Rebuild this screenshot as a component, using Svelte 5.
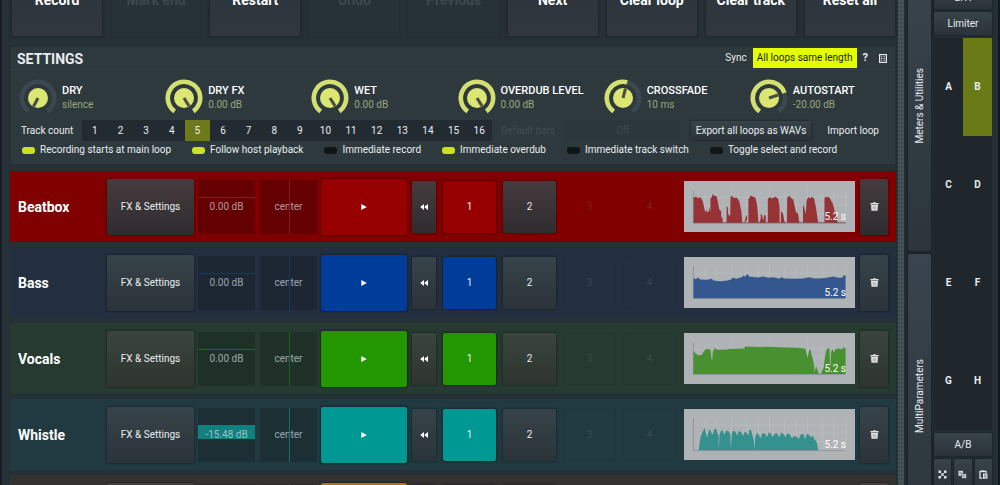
<script lang="ts">
interface Track {
  name: string;
  kind: string;
  gain: string;
  /** Height of the volume bar, percent of its cell. */
  level: number;
  wave: string;
}

const actions = [
  { label: "Record" },
  { label: "Mark end", off: true },
  { label: "Restart" },
  { label: "Undo", off: true },
  { label: "Previous", off: true },
  { label: "Next" },
  { label: "Clear loop" },
  { label: "Clear track" },
  { label: "Reset all" },
];

// Angles are degrees clockwise from the top; the arc runs from -145 to 145.
const knobs = [
  { label: "DRY", value: "silence", angle: -152 },
  { label: "DRY FX", value: "0.00 dB", angle: 148 },
  { label: "WET", value: "0.00 dB", angle: 148 },
  { label: "OVERDUB LEVEL", value: "0.00 dB", angle: 148 },
  { label: "CROSSFADE", value: "10 ms", angle: 15 },
  { label: "AUTOSTART", value: "-20.00 dB", angle: 72 },
];

const options = $state([
  { label: "Recording starts at main loop", on: true },
  { label: "Follow host playback", on: true },
  { label: "Immediate record", on: false },
  { label: "Immediate overdub", on: true },
  { label: "Immediate track switch", on: false },
  { label: "Toggle select and record", on: false },
]);

const counts = Array.from({ length: 16 }, (_, i) => i + 1);
let trackCount = $state(5);
let preset = $state("B");

const tracks: Track[] = [
  {
    name: "Beatbox",
    kind: "red",
    gain: "0.00 dB",
    level: 0,
    wave: "M28 124V50L36 46L40 51L50 49L56 60L62 88L66 94V84L70 94L75 88L77 78L79 94V52L83 48L86 39L91 45H97L101 62L105 84L111 90V106L115 112V120L117 124H127V74L131 80V94L135 106L138 98L139 46L143 44L147 50L158 50L165 60L171 90L174 124H180L185 106L188 100V116L181 124H192V54L196 50L198 43L204 46L213 50L218 72L220 94L222 124H225L229 112V96L233 102L236 118L240 98L244 106V124H250V54L256 48L262 52L272 47L281 53L285 78V124H289V90L295 96L299 118L301 124H307L308 50L314 44L318 49L326 56L332 84L334 94L340 96L344 124H355V70L359 80L363 100L366 56L372 48L376 53L380 47L388 52L394 82L400 124H419V50L427 47L434 50L444 68L450 92L455 106L458 124H482V126H28Z",
  },
  {
    name: "Bass",
    kind: "blue",
    gain: "0.00 dB",
    level: 0,
    wave: "M28 123V62L34 66L42 61L48 67L70 68L82 65L88 70L108 72L130 70L140 67L146 61L156 65L172 60L177 55L182 59L189 50L194 58L220 61L236 58L252 62L268 60L284 65L290 60L300 64L332 65L356 64L372 60L390 64L412 63L430 61L446 58L460 62L474 61V55H482V123Z",
  },
  {
    name: "Vocals",
    kind: "green",
    gain: "0.00 dB",
    level: 0,
    wave: "M28 122V54L34 60L42 66L54 65L57 58L63 49L72 48L79 50L82 78L84 82L86 56L92 44L98 50L126 49L136 48L180 46L182 40L226 42L250 41L300 43L340 44L362 47L366 64L369 74L373 52L378 50L380 64L384 76L388 96L390 118L394 98L400 116L404 124H408L412 112L416 106L420 74L424 52L428 46L434 46L435 88L437 102L438 60L442 48L448 58L452 48L464 46L472 49L476 42L482 46V122Z",
  },
  {
    name: "Whistle",
    kind: "teal",
    gain: "-15.48 dB",
    level: 26,
    wave: "M44 123L48 90L52 76L58 64L62 56L64 68L69 86L74 64L77 60L82 72L86 76L90 60L96 58L100 72L103 80L104 120L106 76L112 62L116 66L120 77L126 64L134 67L138 76L140 120L142 76L147 64L154 68L158 80L164 65L171 70L176 81L181 67L188 72L192 80L195 62L200 62L204 78L208 92L210 122L213 82L218 70L224 78L228 88L234 72L242 73L247 84L253 70L259 72L264 84L270 74L278 72L284 84L290 70L298 76L303 84L308 72L316 76L322 88L329 80L338 84L342 90L348 76L356 74L361 90L367 72L374 78L378 84L384 80L390 92L396 98L400 123Z",
  },
  { name: "", kind: "orange", gain: "", level: 0, wave: "" },
];
</script>

<div class="window">
  <div class="looper">
    <main>
      <div class="toolbar">
        {#each actions as a (a.label)}
          <button class="action" type="button" disabled={a.off}>{a.label}</button>
        {/each}
      </div>

      <section class="settings">
        <header>
          <h2>SETTINGS</h2>
          <button class="plain" type="button">Sync</button>
          <button class="same-length" type="button">All loops same length</button>
          <button class="plain help" type="button">?</button>
          <button class="plain" type="button" aria-label="Menu">
            <svg width="8" height="9" viewBox="0 0 8 9">
              <rect x=".6" y=".6" width="6.8" height="7.8" fill="none" stroke="#e8ecee" stroke-width="1.2" />
              <path d="M2.2 2.8h1.2M4.6 2.8h1.2M2.2 4.5h1.2M4.6 4.5h1.2M2.2 6.2h1.2M4.6 6.2h1.2" stroke="#e8ecee" stroke-width="1" />
            </svg>
          </button>
        </header>

        <div class="knobs">
          {#each knobs as k (k.label)}
            <label class="knob">
              <svg width="40" height="40" viewBox="-20 -20 40 40">
                <circle
                  class="arc track"
                  r="16.2"
                  pathLength="360"
                  stroke-dasharray="290 360"
                  transform="rotate(125)"
                />
                {#if k.angle > -145}
                  <circle
                    class="arc"
                    r="16.2"
                    pathLength="360"
                    stroke-dasharray="{Math.min(k.angle, 145) + 145} 360"
                    transform="rotate(125)"
                  />
                {/if}
                <circle r="10" fill="#dbe673" />
                <path d="M0 0V-9.6" stroke="#4b4e3c" stroke-width="3" transform="rotate({k.angle})" />
              </svg>
              <span class="knob-text">
                <b>{k.label}</b>
                <span>{k.value}</span>
              </span>
              <input class="hit" type="range" min="-145" max="145" value={k.angle} />
            </label>
          {/each}
        </div>

        <div class="count-row">
          <span class="count-label">Track count</span>
          <div class="counts" role="radiogroup" aria-label="Track count">
            {#each counts as n (n)}
              <label class:picked={n === trackCount}>
                <input class="hit" type="radio" name="count" value={n} bind:group={trackCount} />{n}
              </label>
            {/each}
          </div>
          <label class="bars-label" for="bars">Default bars</label>
          <select id="bars" disabled><option>Off</option></select>
          <button class="raised export" type="button">Export all loops as WAVs</button>
          <button class="plain import" type="button">Import loop</button>
        </div>

        <div class="options">
          {#each options as o (o.label)}
            <label><input type="checkbox" bind:checked={o.on} />{o.label}</label>
          {/each}
        </div>
      </section>

      <div class="tracks">
        {#each tracks as t (t.kind)}
          <section class="row {t.kind}">
            <h3>{t.name}</h3>
            <div class="mix">
              <button class="raised tall" type="button">FX &amp; Settings</button>
              <label class="cell volume">
                {#if t.level}
                  <i class="fill" style="height: {t.level}%"></i>
                {:else}
                  <i class="zero"></i>
                {/if}
                <span>{t.gain}</span>
                <input class="hit" type="range" />
              </label>
              <label class="cell pan">
                <span>center</span>
                <i class="middle"></i>
                <input class="hit" type="range" />
              </label>
              <button class="lit play" type="button" aria-label="Play">
                <svg width="6" height="6" viewBox="0 0 6 6"><path d="M.3 0L5.8 3L.3 6Z" fill="#fff" /></svg>
              </button>
              <button class="raised rewind" type="button" aria-label="Rewind">
                <svg width="8" height="6" viewBox="0 0 8 6"><path d="M4 0V6L.2 3ZM8 0V6L4.2 3Z" fill="#fff" /></svg>
              </button>
            </div>
            <div class="loops">
              <button class="lit" type="button">1</button>
              <button class="raised" type="button">2</button>
              <button class="empty" type="button" disabled>3</button>
              <button class="empty" type="button" disabled>4</button>
            </div>
            <div class="wave">
              <svg viewBox="0 0 510 152" preserveAspectRatio="none">
                <path
                  d="M62 28V124M96 28V124M142 24V124M187 28V124M222 28V124M255 24V124M300 28V124M334 28V124M368 24V124M414 28V124M448 28V124M482 28V124M28 48H482M28 72H482M28 98H482"
                  stroke="#bbbec1"
                  stroke-width="2"
                />
                <path d={t.wave} class="shape" />
                <path d="M28 28V124H482" fill="none" stroke="#666e74" stroke-opacity=".6" stroke-width="2" />
              </svg>
              <span>5.2 s</span>
            </div>
            <button class="raised trash" type="button" aria-label="Delete">
              <svg width="9" height="9" viewBox="0 0 9 9">
                <path d="M.4 1.1H3L3.4.3H5.6L6 1.1H8.6V2.5H.4ZM1 3H8L7.6 8.2Q7.5 8.8 6.9 8.8H2.1Q1.5 8.8 1.4 8.2Z" fill="#e2e2e2" />
                <path d="M3.2 4V7.6M4.5 4V7.6M5.8 4V7.6" stroke="#888" stroke-width=".5" />
              </svg>
            </button>
          </section>
        {/each}
      </div>
    </main>

    <div class="scrollbar"></div>

    <nav class="tabs">
      <button type="button"><span>Meters &amp; Utilities</span></button>
      <button type="button"><span>MultiParameters</span></button>
    </nav>

    <aside>
      <button class="raised side-top" type="button">LTH</button>
      <button class="raised" type="button">Limiter</button>
      <div class="presets">
        {#each ["A", "B", "C", "D", "E", "F", "G", "H"] as p (p)}
          <button type="button" class:active={p === preset} onclick={() => (preset = p)}>{p}</button>
        {/each}
      </div>
      <button class="raised" type="button">A/B</button>
      <div class="tools">
        <button class="raised" type="button" aria-label="Random">
          <svg width="9" height="9" viewBox="0 0 9 9" fill="#dfe4e6">
            <path d="M.5 .5H3V3H.5ZM6 .5H8.5V3H6ZM.5 6H3V8.5H.5ZM6 6H8.5V8.5H6ZM3.5 3.5H5.5V5.5H3.5Z" />
            <path d="M1 1L8 8M8 1L1 8" stroke="#dfe4e6" stroke-width=".9" />
          </svg>
        </button>
        <button class="raised" type="button" aria-label="Copy">
          <svg width="9" height="9" viewBox="0 0 9 9">
            <path d="M.5 .8H5V5.8H.5Z" fill="#dfe4e6" />
            <path d="M1.3 2.3H4M1.3 3.8H4" stroke="#5d666b" stroke-width=".6" />
            <path d="M3.8 3.8H8.5V8.5H3.8Z" fill="#dfe4e6" stroke="#2b353b" stroke-width=".6" />
            <path d="M5 5.5H7.5M5 7H7.5" stroke="#5d666b" stroke-width=".6" />
          </svg>
        </button>
        <button class="raised" type="button" aria-label="Paste">
          <svg width="9" height="9" viewBox="0 0 9 9">
            <path d="M3.5 8.2H1V1.3H7V3" fill="none" stroke="#dfe4e6" stroke-width="1.3" />
            <path d="M2.5 .4H5.5V2.2H2.5Z" fill="#dfe4e6" />
            <path d="M4 3.5H8.5V8.7H4Z" fill="#dfe4e6" />
            <path d="M5 5.3H7.5M5 7H7.5" stroke="#4a5359" stroke-width=".7" />
          </svg>
        </button>
      </div>
    </aside>
  </div>
</div>

<style>
  :global(body) {
    margin: 0;
    background: #20292f;
  }
  .window {
    height: 100vh;
    overflow: hidden;
    background: #20292f;
    color: #e9edef;
    font-family: Roboto, "Liberation Sans", sans-serif;
    font-size: 10px;
    line-height: 14px;
  }
  /* The view is scrolled half a toolbar down. */
  .looper {
    display: flex;
    height: calc(100vh + 92px);
    margin-top: -36px;
    border-right: 2px solid #14191d;
    border-left: 2px solid #151a24;
  }
  button {
    padding: 0;
    border: 0;
    border-radius: 2px;
    background: none;
    color: inherit;
    font: inherit;
    white-space: nowrap;
    cursor: pointer;
  }
  button svg {
    display: block;
    margin: auto;
  }
  h2,
  h3 {
    margin: 0;
    font-size: 14px;
    font-weight: 700;
  }
  .hit {
    position: absolute;
    inset: 0;
    width: 100%;
    height: 100%;
    margin: 0;
    opacity: 0;
    cursor: pointer;
  }
  .raised {
    background: linear-gradient(#37434a, #2a3339);
    box-shadow: 0 0 2px 1px rgb(0 0 0 / 0.25);
  }
  main {
    flex: 1;
    min-width: 0;
    padding: 0 2px 0 8px;
    background: #263137;
  }

  .toolbar {
    display: grid;
    grid-template-columns: repeat(9, 1fr);
    gap: 9px;
    margin-bottom: 11px;
    padding: 0 1px 0 2px;
  }
  .action {
    height: 72px;
    background: linear-gradient(#333f46, #2c363c 50%, #30383e);
    box-shadow: 0 0 2px 2px rgb(0 0 0 / 0.16);
    color: #fff;
    font-size: 14px;
    font-weight: 700;
  }
  .action:disabled {
    background: #273237;
    box-shadow: 0 0 2px 1px rgb(0 0 0 / 0.05);
    color: #3d484d;
  }

  .settings {
    padding-bottom: 7px;
    margin: 0 1px;
    background: #2e393e;
  }
  .settings header {
    display: flex;
    align-items: center;
    height: 22px;
    margin-bottom: 8px;
    padding: 0 8px 0 6px;
    border-bottom: 1px solid #344045;
  }
  .settings h2 {
    flex: 1;
    padding-top: 2px;
  }
  .same-length {
    height: 20px;
    margin: 0 6px;
    padding: 0 4px;
    border-radius: 0;
    background: #e3ff00;
    color: #1b2400;
  }
  .help {
    margin-right: 11px;
    font-size: 11px;
    font-weight: 700;
  }
  .knobs {
    display: grid;
    grid-template-columns: repeat(6, 1fr);
    padding-left: 7px;
  }
  .knob {
    position: relative;
    display: flex;
    align-items: center;
    gap: 4px;
  }
  .arc {
    fill: none;
    stroke: #d3df71;
    stroke-width: 4.6;
  }
  .arc.track {
    stroke: #3c474f;
  }
  .knob-text {
    display: flex;
    flex-direction: column;
    color: #97a77b;
  }
  .knob-text b {
    color: #fff;
    font-size: 11px;
    font-weight: 500;
  }
  .count-row {
    display: flex;
    align-items: center;
    height: 21px;
    margin-top: 2px;
    padding: 0 8px 0 10px;
  }
  .count-label {
    width: 61px;
  }
  .counts {
    display: grid;
    grid-template-columns: repeat(16, 1fr);
    flex: 0 1 410px;
    background: #222b32;
    line-height: 21px;
    text-align: center;
  }
  .counts label {
    position: relative;
  }
  .counts .picked {
    background: #6d7a1b;
  }
  .bars-label {
    margin-left: 9px;
    color: #414c50;
  }
  select {
    flex: 1;
    height: 20px;
    margin: 0 11px;
    border: 0;
    appearance: none;
    background: #2c373b;
    color: #3e494d;
    font: inherit;
    text-align: center;
    opacity: 1;
  }
  .export {
    height: 19px;
    padding: 0 5px;
  }
  .import {
    margin: 0 8px 0 16px;
  }
  .options {
    display: flex;
    gap: 21px;
    margin-top: 2px;
    padding-left: 11px;
    white-space: nowrap;
  }
  .options label {
    display: flex;
    align-items: center;
    gap: 5px;
  }
  .options input {
    width: 13px;
    height: 7px;
    margin: 0;
    border-radius: 3px;
    appearance: none;
    background: #101516;
  }
  .options input:checked {
    background: #cbe31e;
  }

  .tracks {
    display: flex;
    flex-direction: column;
    gap: 5px;
    margin-top: 7px;
  }
  .row {
    --cell: rgb(0 0 0 / 0.17);
    display: flex;
    align-items: center;
    height: 71px;
    padding: 0 8px;
    background: var(--bg);
  }
  .red {
    --bg: #800000;
    --lit: #970000;
    --line: #8e1a14;
    --shape: #973235;
    --cell: rgb(0 0 0 / 0.22);
  }
  .blue {
    --bg: #232f3f;
    --lit: #003c99;
    --line: #17375c;
    --shape: #34578f;
  }
  .green {
    --bg: #263a31;
    --lit: #229700;
    --line: #245f24;
    --shape: #479131;
  }
  .teal {
    --bg: #213940;
    --lit: #009892;
    --line: #12706f;
    --shape: #34928e;
  }
  .orange {
    --bg: #343131;
    --lit: #b9710b;
    --line: #6b4a20;
    --shape: #a97935;
  }
  .red .raised {
    background: linear-gradient(#443b3e, #2f2c2f);
  }
  .green .raised {
    background: linear-gradient(#3a453e, #2e342e);
  }
  .orange .raised {
    background: linear-gradient(#453f3c, #33302e);
  }
  h3 {
    width: 89px;
    color: #fff;
  }
  .mix,
  .loops {
    display: flex;
    align-items: center;
  }
  .mix {
    gap: 4px;
    margin-right: 7px;
  }
  .loops {
    gap: 7px;
    margin-right: 8px;
  }
  .tall {
    width: 87px;
    height: 56px;
  }
  .cell {
    position: relative;
    width: 57px;
    height: 54px;
    background: var(--cell);
    color: rgb(220 225 230 / 0.68);
    line-height: 54px;
    text-align: center;
  }
  .pan {
    margin-left: 1px;
  }
  .cell span {
    position: relative;
  }
  .zero,
  .fill {
    position: absolute;
    top: 33%;
    right: 0;
    left: 0;
    height: 1px;
    background: var(--line);
  }
  .fill {
    background: #138080;
  }
  .middle {
    position: absolute;
    top: 0;
    bottom: 0;
    left: 50%;
    width: 1px;
    background: var(--line);
  }
  .lit {
    background: var(--lit);
    box-shadow: 0 0 2px 1px rgb(0 0 0 / 0.3);
  }
  .play {
    width: 86px;
    height: 56px;
  }
  .rewind {
    width: 24px;
    height: 52px;
    margin-left: 1px;
  }
  .loops button {
    width: 53px;
    height: 52px;
  }
  .loops .empty {
    border: 1px solid rgb(0 0 0 / 0.04);
    color: rgb(150 150 150 / 0.22);
  }
  .wave {
    position: relative;
    flex: 1;
    height: 51px;
    background: #b0b3b6;
  }
  .wave svg {
    display: block;
    width: 100%;
    height: 100%;
  }
  .shape {
    fill: var(--shape);
  }
  .wave span {
    position: absolute;
    right: 9px;
    bottom: 8px;
    color: #fff;
  }
  .trash {
    width: 28px;
    height: 56px;
    margin-left: 5px;
  }

  .scrollbar {
    width: 6px;
    background: repeating-linear-gradient(#47545b 0 2px, #3f4b52 2px 4px);
  }
  .tabs {
    display: flex;
    flex-direction: column;
    gap: 3px;
    width: 23px;
    padding: 0 3px 0 4px;
    background: #222b31;
  }
  .tabs button {
    flex: 1;
    background: linear-gradient(#3a444e, #2b353b);
    box-shadow: 0 0 2px 1px rgb(0 0 0 / 0.2);
  }
  .tabs span {
    writing-mode: vertical-rl;
    transform: rotate(180deg);
  }

  aside {
    display: flex;
    flex-direction: column;
    gap: 3px;
    width: 58px;
    padding-right: 6px;
    background: #253036;
  }
  aside > .raised {
    height: 23px;
  }
  aside > .side-top {
    margin-top: 22px;
  }
  .presets {
    display: grid;
    grid-template-columns: 1fr 1fr;
    grid-template-rows: repeat(4, 98px);
    background: #1f272d;
  }
  .presets button {
    border-radius: 0;
    font-weight: 700;
  }
  .presets .active {
    background: #6a7a17;
  }
  .tools {
    display: grid;
    grid-template-columns: repeat(3, 1fr);
    gap: 3px;
  }
  .tools button {
    height: 30px;
  }
</style>
